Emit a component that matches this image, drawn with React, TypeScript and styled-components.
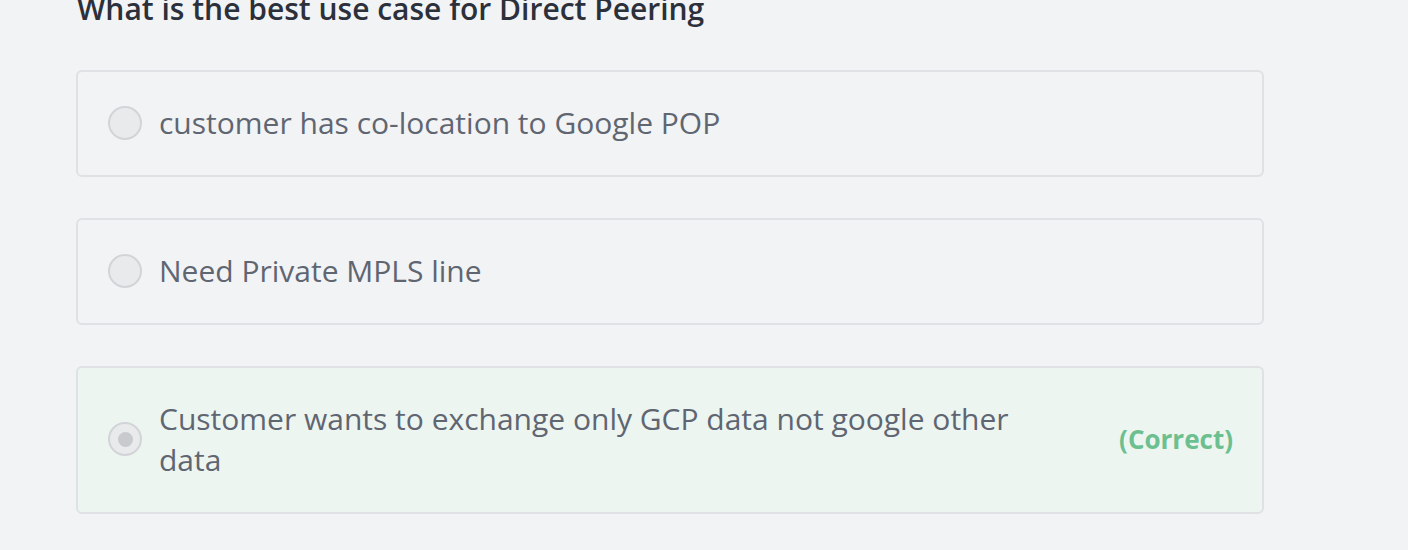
import React from 'react';
import styled, { createGlobalStyle } from 'styled-components';

const GlobalStyle = createGlobalStyle`
  html, body {
    margin: 0;
    padding: 0;
    background: #f2f3f5;
    font-family: 'Open Sans', 'Noto Sans', sans-serif;
    overflow: hidden;
  }
`;

const Page = styled.main`
  width: 1408px;
  height: 550px;
  padding: 0 144px 0 76px;
  box-sizing: border-box;
`;

const Heading = styled.h2`
  margin: -11px 0 0 1px;
  font-size: 30px;
  line-height: 40px;
  font-weight: 600;
  color: #2b303b;
`;

const Options = styled.div`
  display: flex;
  flex-direction: column;
  gap: 41px;
  margin-top: 41px;
`;

const Option = styled.label<{ $correct?: boolean }>`
  display: flex;
  align-items: center;
  padding: 30px 29px 32px 30px;
  border: 2px solid #dfe1e4;
  border-radius: 6px;
  background: ${({ $correct }) => ($correct ? '#edf5f1' : '#f2f3f5')};
`;

const Radio = styled.span<{ $checked?: boolean }>`
  position: relative;
  flex: none;
  width: 34px;
  height: 34px;
  box-sizing: border-box;
  border-radius: 50%;
  border: 2px solid #d2d4d7;
  background: #e9eaec;

  &::after {
    content: '';
    display: ${({ $checked }) => ($checked ? 'block' : 'none')};
    position: absolute;
    top: 50%;
    left: 50%;
    width: 15px;
    height: 15px;
    margin: -7.5px 0 0 -7.5px;
    border-radius: 50%;
    background: #c9cacd;
  }
`;

const Text = styled.span`
  flex: 1;
  margin-left: 17px;
  padding-right: 80px;
  font-size: 30px;
  line-height: 41px;
  color: #5f6671;
`;

const Verdict = styled.span`
  flex: none;
  font-size: 26px;
  font-weight: 700;
  color: #6cc08f;
`;

const options = [
  { text: 'customer has co-location to Google POP' },
  { text: 'Need Private MPLS line' },
  { text: 'Customer wants to exchange only GCP data not google other data', correct: true },
];

const App: React.FC = () => (
  <>
    <GlobalStyle />
    <Page>
      <Heading>What is the best use case for Direct Peering</Heading>
      <Options>
        {options.map((o) => (
          <Option key={o.text} $correct={o.correct}>
            <Radio $checked={o.correct} />
            <Text>{o.text}</Text>
            {o.correct && <Verdict>(Correct)</Verdict>}
          </Option>
        ))}
      </Options>
    </Page>
  </>
);

export default App;
